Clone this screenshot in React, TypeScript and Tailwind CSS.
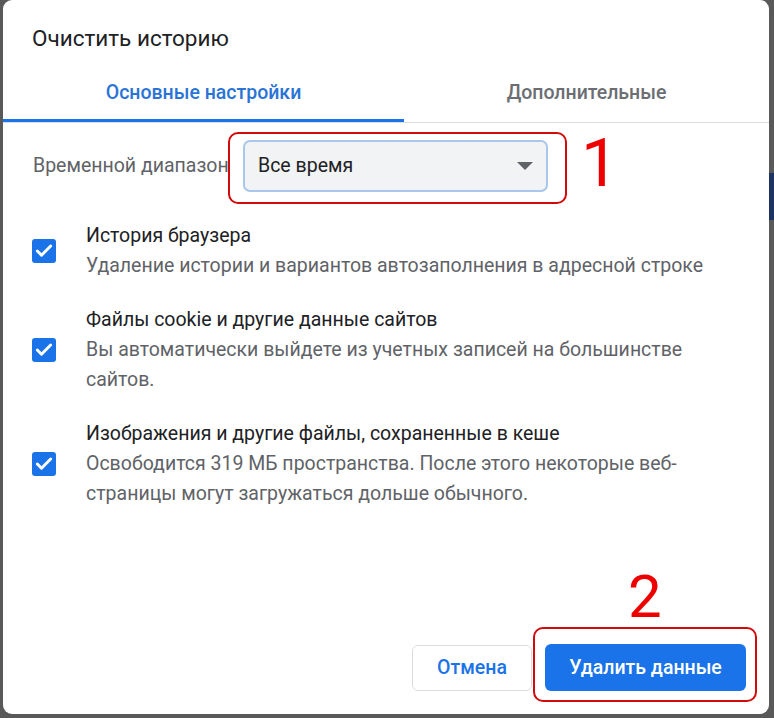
import { Check } from "lucide-react";

const items = [
  {
    title: "История браузера",
    desc: "Удаление истории и вариантов автозаполнения в адресной строке",
  },
  {
    title: "Файлы cookie и другие данные сайтов",
    desc: "Вы автоматически выйдете из учетных записей на большинстве сайтов.",
  },
  {
    title: "Изображения и другие файлы, сохраненные в кеше",
    desc: "Освободится 319 МБ пространства. После этого некоторые веб-страницы могут загружаться дольше обычного.",
  },
];

export default function App() {
  return (
    <div
      className="flex w-[774px] h-[718px] bg-[#595959] overflow-hidden"
      style={{ fontFamily: "Roboto, 'Noto Sans', Arial, sans-serif" }}
    >
      <div className="w-[3px] shrink-0" />

      {/* dialog */}
      <div className="flex flex-col w-[766px] h-[714px] shrink-0 bg-white rounded-[9px]">
        <div className="h-[66px] pt-[24px] pl-[29px] text-[22.5px] leading-[28px] text-[#202124]">
          Очистить историю
        </div>

        {/* tabs */}
        <div className="flex border-b border-[#dadce0]">
          <div className="w-[401px] h-[56px] flex items-center justify-center border-b-[3px] border-[#1a73e8] text-[19.5px] font-medium text-[#2a74d6]">
            Основные настройки
          </div>
          <div className="flex-1 h-[56px] flex items-center justify-center pb-[3px] text-[19.5px] font-medium text-[#6b6e72]">
            Дополнительные
          </div>
        </div>

        {/* time range */}
        <div className="flex items-center mt-[17px] pl-[30px]">
          <div className="w-[210px] text-[19.5px] text-[#5f6368] whitespace-nowrap">Временной диапазон</div>
          <div className="relative">
            <div className="flex items-center justify-between w-[305px] h-[52px] pl-[13px] pr-[13px] bg-[#f1f3f4] border-2 border-[#a9c6ec] rounded-[7px] text-[19.5px] text-[#202124]">
              <span>Все время</span>
              <svg width="16" height="8" viewBox="0 0 16 8">
                <path d="M0 0h16L8 8z" fill="#5f6368" />
              </svg>
            </div>
            <span className="absolute left-[-15px] right-[-19px] top-[-8px] bottom-[-12px] border-2 border-[#d10a0a] rounded-[10px]" />
            <span className="absolute left-[338px] top-[-10px] text-[67px] leading-none text-[#ee0000]">1</span>
          </div>
        </div>

        {/* checkboxes */}
        <div className="flex flex-col gap-[24px] mt-[29px] pl-[29px]">
          {items.map((it) => (
            <div key={it.title} className="flex items-center gap-[30px]">
              <div className="flex items-center justify-center w-[24px] h-[24px] shrink-0 rounded-[3px] bg-[#1a73e8]">
                <Check size={20} strokeWidth={3.5} className="text-white" />
              </div>
              <div className="w-[630px] text-[19.5px] leading-[30px]">
                <div className="text-[#202124]">{it.title}</div>
                <div className="text-[#5f6368]">{it.desc}</div>
              </div>
            </div>
          ))}
        </div>

        {/* footer */}
        <div className="flex justify-end items-end gap-[13px] mt-auto pr-[23px] pb-[23px]">
          <button className="w-[120px] h-[46px] rounded-[6px] border border-[#dadce0] bg-white text-[19.5px] font-medium text-[#1a73e8]">
            Отмена
          </button>
          <div className="relative">
            <button className="w-[201px] h-[47px] rounded-[6px] bg-[#1a73e8] text-[19.5px] font-medium text-white">
              Удалить данные
            </button>
            <span className="absolute left-[-12px] right-[-11px] top-[-17px] bottom-[-11px] border-2 border-[#d10a0a] rounded-[10px]" />
            <span className="absolute left-[83px] top-[-77px] text-[60px] leading-none text-[#ee0000]">2</span>
          </div>
        </div>
      </div>

      {/* page behind the dialog */}
      <div className="flex flex-col w-[5px] shrink-0">
        <div className="h-[173px]" />
        <div className="h-[47px] bg-[#1d3461]" />
      </div>
    </div>
  );
}
